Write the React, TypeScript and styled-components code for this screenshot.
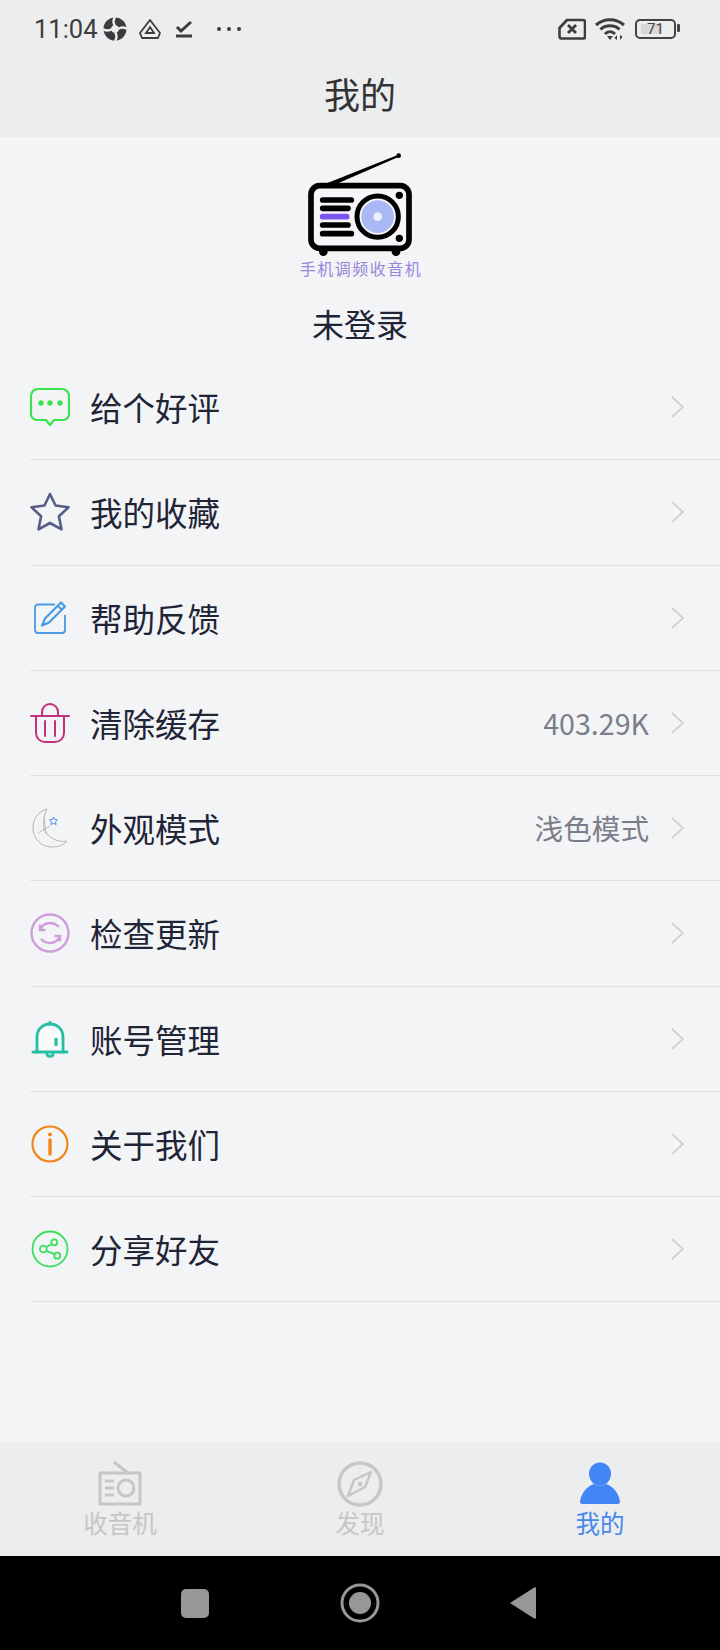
import React from "react";
import styled, { createGlobalStyle } from "styled-components";

const GlobalStyle = createGlobalStyle`
  html, body {
    margin: 0;
    padding: 0;
    background: #f3f4f6;
  }
  * {
    box-sizing: border-box;
  }
`;

const Page = styled.div`
  width: 720px;
  height: 1650px;
  display: flex;
  flex-direction: column;
  background: #f3f4f6;
  font-family: "Noto Sans CJK SC", "Noto Sans", sans-serif;
  overflow: hidden;
`;

const Header = styled.header`
  height: 137px;
  background: #ecedef;
  flex-shrink: 0;
`;

const StatusBar = styled.div`
  height: 54px;
  display: flex;
  align-items: center;
  justify-content: space-between;
  padding: 3px 44px 0 34px;
  color: #3c3c3c;
`;

const StatusGroup = styled.div`
  display: flex;
  align-items: center;
`;

const Time = styled.span`
  font-family: Roboto, sans-serif;
  font-size: 25.5px;
  line-height: 30px;
  margin-right: 5px;
`;

const Battery = styled.div`
  width: 41px;
  height: 20px;
  margin-left: 10px;
  border: 2px solid #444;
  border-radius: 5px;
  background: linear-gradient(90deg, #d8d8da 70%, transparent 70%) no-repeat 4px 3px / 30px 10px;
  font-family: Roboto, sans-serif;
  font-size: 15px;
  line-height: 16px;
  text-align: center;
  color: #444;
  position: relative;

  &::after {
    content: "";
    position: absolute;
    right: -6px;
    top: 3px;
    width: 3px;
    height: 8px;
    border-radius: 1px;
    background: #444;
  }
`;

const Title = styled.h1`
  margin: 0;
  height: 83px;
  font-size: 36px;
  font-weight: 400;
  line-height: 78px;
  text-align: center;
  color: #333;
`;

const Main = styled.main`
  flex: 1;
  min-height: 0;
`;

const Profile = styled.section`
  height: 218px;
  padding-top: 3px;
  display: flex;
  flex-direction: column;
  align-items: center;
`;

const LogoCaption = styled.div`
  font-size: 16px;
  font-weight: 400;
  line-height: 16px;
  letter-spacing: 1.5px;
  padding-left: 2px;
  color: #9a86dd;
`;

const UserName = styled.div`
  margin-top: 25px;
  font-size: 32px;
  line-height: 44px;
  color: #1f2437;
`;

const RowItem = styled.div`
  height: 105.25px;
  margin-left: 30px;
  padding-right: 36px;
  display: flex;
  align-items: center;
  border-bottom: 1px solid #dfe0e3;
`;

const RowIcon = styled.svg`
  width: 40px;
  height: 40px;
  flex-shrink: 0;
  margin-right: 20px;
`;

const RowLabel = styled.span`
  flex: 1;
  font-size: 32.5px;
  line-height: 44px;
  color: #1f2437;
`;

const RowValue = styled.span`
  font-size: 28.6px;
  line-height: 40px;
  color: #7b7e8a;
  margin-right: 22px;
`;

const Chevron = styled.svg`
  width: 13px;
  height: 22px;
  flex-shrink: 0;
`;

const BottomNav = styled.nav`
  height: 114px;
  flex-shrink: 0;
  background: #ecedef;
  display: grid;
  grid-template-columns: repeat(3, 240px);
`;

const NavItem = styled.div<{ $active?: boolean }>`
  padding-top: 19px;
  display: flex;
  flex-direction: column;
  align-items: center;
  font-size: 24.5px;
  line-height: 34px;
  color: ${({ $active }) => ($active ? "#4a88ec" : "#c6c6c6")};
`;

const NavIcon = styled.svg`
  width: 46px;
  height: 46px;
  margin-bottom: -1px;
`;

const SystemBar = styled.div`
  height: 94px;
  flex-shrink: 0;
  background: #000;
  display: flex;
  align-items: center;
  justify-content: center;
  gap: 130.5px;
  padding-right: 3px;
`;

const ChevronRight = () => (
  <Chevron viewBox="0 0 13 22">
    <path d="M1 1l11 10L1 21" fill="none" stroke="#cfd0d3" strokeWidth="1.7" />
  </Chevron>
);

const icons: Record<string, React.ReactNode> = {
  chat: (
    <g>
      <path
        d="M8 2h24a7 7 0 0 1 7 7v18a6 6 0 0 1-6 6h-9l-4 5-4-5H7a6 6 0 0 1-6-6V9a7 7 0 0 1 7-7z"
        fill="none"
        stroke="#3ce24c"
        strokeWidth="2.2"
        strokeLinejoin="round"
      />
      <circle cx="11" cy="16" r="2.7" fill="#3ce24c" />
      <circle cx="20" cy="16" r="2.7" fill="#3ce24c" />
      <circle cx="30" cy="16" r="2.7" fill="#3ce24c" />
    </g>
  ),
  star: (
    <path
      d="M20 2l5.500 11.500 13 1.800-9.600 9 2.600 13L20 31 8.500 37.300l2.600-13-9.600-9 13-1.800z"
      fill="none"
      stroke="#555f86"
      strokeWidth="2.6"
      strokeLinejoin="round"
    />
  ),
  edit: (
    <g fill="none" stroke="#4a9ae2" strokeWidth="1.8" strokeLinejoin="round">
      <path d="M25 6.500H8a3 3 0 0 0-3 3V32a3 3 0 0 0 3 3h24a3 3 0 0 0 3-3V17" />
      <path d="M31 4.500l4 4-16 16-7 3 3-7z" strokeWidth="2.2" />
      <path d="M28 8l4 4" />
    </g>
  ),
  trash: (
    <g fill="none" stroke="#c2317c" strokeWidth="2" strokeLinecap="round">
      <path d="M1 13h38" />
      <path d="M12 13V9a8 8 0 0 1 8-8 8 8 0 0 1 8 8v4" />
      <path d="M6 13v17a9 9 0 0 0 9 9h10a9 9 0 0 0 9-9V13" />
      <path d="M15 18v15M25 18v15" />
    </g>
  ),
  moon: (
    <g fill="none">
      <path
        d="M17 1C7 4 3 12 3 20c0 11 9 19 18 19 7 0 13-2 16-6-9 2-19-3-23-12-1-7 0-14 3-20z"
        stroke="#b4b4b6"
        strokeWidth="1"
      />
      <path d="M8 25l12-7M14 9l2 17" stroke="#b4b4b6" strokeWidth="0.8" />
      <path
        d="M23.500 9l1.200 2.600 2.800.3-2 1.900.6 2.800-2.600-1.400-2.600 1.400.6-2.800-2-1.900 2.800-.3z"
        stroke="#4a8fe0"
        strokeWidth="1"
      />
    </g>
  ),
  sync: (
    <g fill="none" stroke="#cf9ddc" strokeWidth="2.4">
      <circle cx="20" cy="20" r="18.500" />
      <path d="M10 17c2-5 6-7 10-7 4 0 7 2 9 4" />
      <path d="M30 23c-2 5-6 7-10 7-4 0-7-2-9-4" />
      <path d="M10 11.500V17h5.500M30 28.500V23h-5.500" />
    </g>
  ),
  bell: (
    <g fill="none" stroke="#25bfa4" strokeWidth="2.800" strokeLinecap="round">
      <path d="M7 33V18C7 10 13 5 20 5s13 5 13 13v15" fill="#f8fbfa" />
      <path d="M3 33h34" strokeWidth="3" />
      <path d="M17 35c0 3 6 3 6 0" />
      <path d="M26 19v8" strokeWidth="3.200" strokeLinecap="butt" />
      <path d="M20 3.500v1.500" />
    </g>
  ),
  info: (
    <g fill="none" stroke="#f0861c">
      <circle cx="20" cy="20" r="17.500" strokeWidth="2.200" />
      <path d="M20 16v14" strokeWidth="3.400" strokeLinecap="round" />
      <circle cx="20" cy="10.500" r="2" fill="#f0861c" stroke="none" />
    </g>
  ),
  share: (
    <g fill="none" stroke="#38e05c" strokeWidth="1.800">
      <circle cx="20" cy="20" r="17.500" />
      <circle cx="13.300" cy="20" r="3.400" />
      <circle cx="24.300" cy="13.300" r="3" />
      <circle cx="27.300" cy="26.700" r="3" />
      <path d="M16.200 18.200l5.400-3.200M16.200 21.800l8.300 3.400" />
    </g>
  ),
};

const rows = [
  { icon: "chat", label: "给个好评" },
  { icon: "star", label: "我的收藏" },
  { icon: "edit", label: "帮助反馈" },
  { icon: "trash", label: "清除缓存", value: "403.29K" },
  { icon: "moon", label: "外观模式", value: "浅色模式" },
  { icon: "sync", label: "检查更新" },
  { icon: "bell", label: "账号管理" },
  { icon: "info", label: "关于我们" },
  { icon: "share", label: "分享好友" },
];

const App: React.FC = () => {
  return (
    <Page>
      <GlobalStyle />
      <Header>
        <StatusBar>
          <StatusGroup>
            <Time>11:04</Time>
            <svg width="24" height="24" viewBox="0 0 24 24">
              <circle cx="12" cy="12" r="11.500" fill="#3c3c3c" />
              <g fill="none" stroke="#ecedef" strokeWidth="2.400">
                <path d="M12 9C10 6 10 3 12 0" />
                <path d="M15 12c3-2 6-2 9 0" />
                <path d="M12 15c2 3 2 6 0 9" />
                <path d="M9 12c-3 2-6 2-9 0" />
              </g>
              <circle cx="12" cy="12" r="3.800" fill="#ecedef" />
            </svg>
            <svg width="24" height="22" viewBox="0 0 24 22" style={{ marginLeft: 11 }}>
              <path d="M12 2l10 13-2 5H4l-2-5z" fill="none" stroke="#3c3c3c" strokeWidth="1.800" strokeLinejoin="round" />
              <path d="M12 9l4 6H8z" fill="none" stroke="#3c3c3c" strokeWidth="1.800" />
            </svg>
            <svg width="18" height="20" viewBox="0 0 18 20" style={{ marginLeft: 13 }}>
              <path d="M2 8l4 4 10-9" fill="none" stroke="#3c3c3c" strokeWidth="3" />
              <path d="M1 17h16" stroke="#3c3c3c" strokeWidth="3" />
            </svg>
            <svg width="26" height="6" viewBox="0 0 26 6" style={{ marginLeft: 23 }}>
              <circle cx="3" cy="3" r="2" fill="#3c3c3c" />
              <circle cx="13" cy="3" r="2" fill="#3c3c3c" />
              <circle cx="23" cy="3" r="2" fill="#3c3c3c" />
            </svg>
          </StatusGroup>
          <StatusGroup>
            <svg width="28" height="22" viewBox="0 0 28 22">
              <path d="M9 2h16a2 2 0 0 1 2 2v15a1.500 1.500 0 0 1-1.500 1.500H3A2 2 0 0 1 1.500 18.500V10z" fill="none" stroke="#3c3c3c" strokeWidth="2.600" strokeLinejoin="round" />
              <path d="M10 7l8 8M18 7l-8 8" stroke="#3c3c3c" strokeWidth="2.800" />
            </svg>
            <svg width="30" height="24" viewBox="0 0 30 24" style={{ marginLeft: 9 }}>
              <g fill="none" stroke="#3c3c3c" strokeWidth="3">
                <path d="M1 8c8-7 20-7 28 0" />
                <path d="M5.500 12.500c5-5 14-5 19 0" />
                <path d="M10 17c3-3 7-3 10 0" />
              </g>
              <path d="M12 19h6l-3 4z" fill="#3c3c3c" />
              <path d="M22 23v-5l-2.500 3zM25 18v5l2.500-3z" fill="#3c3c3c" />
            </svg>
            <Battery>71</Battery>
          </StatusGroup>
        </StatusBar>
        <Title>我的</Title>
      </Header>

      <Main>
        <Profile>
          <svg width="180" height="120" viewBox="0 0 540 360">
            <path d="M150 138L385 44l2 6L185 138z" fill="#000" />
            <circle cx="386" cy="47" r="7" fill="#000" />
            <circle cx="160" cy="335" r="13" fill="#000" />
            <circle cx="378" cy="335" r="13" fill="#000" />
            <rect x="123" y="137" width="294" height="188" rx="26" fill="#f6f6fa" stroke="#000" strokeWidth="17" />
            <g stroke="#000" strokeWidth="17" strokeLinecap="round">
              <path d="M158 180h86M158 205h76M158 255h76M158 281h86" />
            </g>
            <path d="M158 230h72" stroke="#7d55ee" strokeWidth="17" strokeLinecap="round" />
            <circle cx="323" cy="230" r="62" fill="#f6f6fa" stroke="#000" strokeWidth="15" />
            <circle cx="323" cy="230" r="49" fill="#aab9f6" />
            <circle cx="323" cy="230" r="13" fill="#eef1fd" />
            <circle cx="388" cy="166" r="11" fill="#000" />
            <circle cx="388" cy="295" r="11" fill="#000" />
          </svg>
          <LogoCaption>手机调频收音机</LogoCaption>
          <UserName>未登录</UserName>
        </Profile>

        {rows.map((row) => (
          <RowItem key={row.label}>
            <RowIcon viewBox="0 0 40 40">{icons[row.icon]}</RowIcon>
            <RowLabel>{row.label}</RowLabel>
            {row.value && <RowValue>{row.value}</RowValue>}
            <ChevronRight />
          </RowItem>
        ))}
      </Main>

      <BottomNav>
        <NavItem>
          <NavIcon viewBox="0 0 46 46">
            <g fill="none" stroke="#c6c6c6" strokeWidth="3">
              <path d="M3 12h40v31H3z" strokeLinejoin="round" />
              <path d="M17 1l14 11" />
              <circle cx="29" cy="27" r="8" />
              <path d="M8 20h9M8 27h9M8 34h9" />
            </g>
          </NavIcon>
          收音机
        </NavItem>
        <NavItem>
          <NavIcon viewBox="0 0 46 46">
            <circle cx="23" cy="23" r="21" fill="none" stroke="#c6c6c6" strokeWidth="3.400" />
            <path d="M34 11l-6 15-17 9 6-16z" fill="none" stroke="#c6c6c6" strokeWidth="2.400" strokeLinejoin="round" />
            <circle cx="23" cy="23" r="2.200" fill="#c6c6c6" />
          </NavIcon>
          发现
        </NavItem>
        <NavItem $active>
          <NavIcon viewBox="0 0 46 46">
            <ellipse cx="23" cy="13" rx="11" ry="11.500" fill="#4286f5" />
            <path d="M3 41c1-9 7-16 14-18 3 2 9 2 12 0 7 2 13 9 14 18 0 1-1 2-2 2H5c-1 0-2-1-2-2z" fill="#4286f5" />
          </NavIcon>
          我的
        </NavItem>
      </BottomNav>

      <SystemBar>
        <svg width="28" height="29" viewBox="0 0 28 29">
          <rect width="28" height="29" rx="5" fill="#979797" />
        </svg>
        <svg width="40" height="40" viewBox="0 0 40 40">
          <circle cx="20" cy="20" r="18" fill="none" stroke="#979797" strokeWidth="3" />
          <circle cx="20" cy="20" r="11" fill="#979797" />
        </svg>
        <svg width="26" height="32" viewBox="0 0 26 32">
          <path d="M26 1v30l-1 1L0 16 25 0z" fill="#979797" />
        </svg>
      </SystemBar>
    </Page>
  );
};

export default App;
